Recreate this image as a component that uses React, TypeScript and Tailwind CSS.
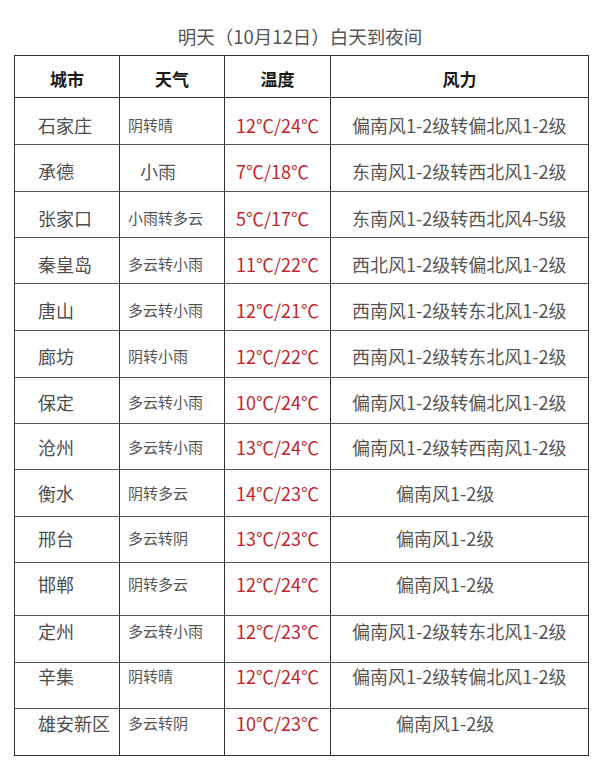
const font = { fontFamily: '"Noto Sans CJK SC", "Noto Sans", sans-serif' };

type Row = {
  city: string;
  weather: string;
  temp: string;
  wind: string;
  h: string;
  off: string;
  wx?: string;
  wd?: string;
};

const rows: Row[] = [
  { city: "石家庄", weather: "阴转晴", temp: "12℃/24℃", wind: "偏南风1-2级转偏北风1-2级", h: "h-[47px]", off: "pt-[8px]" },
  { city: "承德", weather: "小雨", temp: "7℃/18℃", wind: "东南风1-2级转西北风1-2级", h: "h-[47px]", off: "pt-[6px]", wx: "pl-[20px] text-[18px]" },
  { city: "张家口", weather: "小雨转多云", temp: "5℃/17℃", wind: "东南风1-2级转西北风4-5级", h: "h-[46px]", off: "pt-[6px]" },
  { city: "秦皇岛", weather: "多云转小雨", temp: "11℃/22℃", wind: "西北风1-2级转偏北风1-2级", h: "h-[46px]", off: "pt-[6px]" },
  { city: "唐山", weather: "多云转小雨", temp: "12℃/21℃", wind: "西南风1-2级转东北风1-2级", h: "h-[47px]", off: "pt-[6px]" },
  { city: "廊坊", weather: "阴转小雨", temp: "12℃/22℃", wind: "西南风1-2级转东北风1-2级", h: "h-[47px]", off: "pt-[4px]" },
  { city: "保定", weather: "多云转小雨", temp: "10℃/24℃", wind: "偏南风1-2级转偏北风1-2级", h: "h-[46px]", off: "pt-[2px]" },
  { city: "沧州", weather: "多云转小雨", temp: "13℃/24℃", wind: "偏南风1-2级转西南风1-2级", h: "h-[46px]", off: "pt-0" },
  { city: "衡水", weather: "阴转多云", temp: "14℃/23℃", wind: "偏南风1-2级", h: "h-[47px]", off: "pt-0", wd: "pl-[65px]" },
  { city: "邢台", weather: "多云转阴", temp: "13℃/23℃", wind: "偏南风1-2级", h: "h-[46px]", off: "pb-[4px]", wd: "pl-[65px]" },
  { city: "邯郸", weather: "阴转多云", temp: "12℃/24℃", wind: "偏南风1-2级", h: "h-[53px]", off: "pb-[10px]", wd: "pl-[65px]" },
  { city: "定州", weather: "多云转小雨", temp: "12℃/23℃", wind: "偏南风1-2级转东北风1-2级", h: "h-[47px]", off: "pb-[16px]" },
  { city: "辛集", weather: "阴转晴", temp: "12℃/24℃", wind: "偏南风1-2级转偏北风1-2级", h: "h-[46px]", off: "pb-[20px]" },
  { city: "雄安新区", weather: "多云转阴", temp: "10℃/23℃", wind: "偏南风1-2级", h: "h-[46px]", off: "pb-[18px]", wd: "pl-[65px]" },
];

const grid = "grid grid-cols-[105px_105px_106px_1fr]";

export default function App() {
  return (
    <div className="w-[600px] h-[775px] bg-white" style={font}>
      <div className="h-[55px] pt-[24px] text-center text-[18.5px] leading-[24px] text-[#555]">
        明天（10月12日）白天到夜间
      </div>
      <div className="ml-[14px] w-[575px] border border-[#333]">
        {/* header */}
        <div className={`${grid} h-[42px] border-b border-[#333] text-[17px] font-bold text-[#1a1a1a]`}>
          <div className="flex items-center justify-center pt-[5px] border-r border-[#333]">城市</div>
          <div className="flex items-center justify-center pt-[5px] border-r border-[#333]">天气</div>
          <div className="flex items-center justify-center pt-[5px] border-r border-[#333]">温度</div>
          <div className="flex items-center justify-center pt-[5px]">风力</div>
        </div>
        {rows.map((r, i) => (
          <div
            key={r.city}
            className={`${grid} ${r.h} ${i < rows.length - 1 ? "border-b border-[#555]" : ""} leading-[24px]`}
          >
            <div className={`flex items-center ${r.off} pl-[23px] border-r border-[#333] text-[18px] text-[#4d4d4d] whitespace-nowrap`}>
              {r.city}
            </div>
            <div className={`flex items-center ${r.off} ${r.wx ?? "pl-[8px] text-[15px]"} border-r border-[#333] text-[#555] whitespace-nowrap`}>
              {r.weather}
            </div>
            <div className={`flex items-center ${r.off} pl-[11px] border-r border-[#333] text-[18px] text-[#c2262b] whitespace-nowrap`}>
              {r.temp}
            </div>
            <div className={`flex items-center ${r.off} ${r.wd ?? "pl-[21px]"} text-[18px] text-[#555] whitespace-nowrap`}>
              {r.wind}
            </div>
          </div>
        ))}
      </div>
    </div>
  );
}
